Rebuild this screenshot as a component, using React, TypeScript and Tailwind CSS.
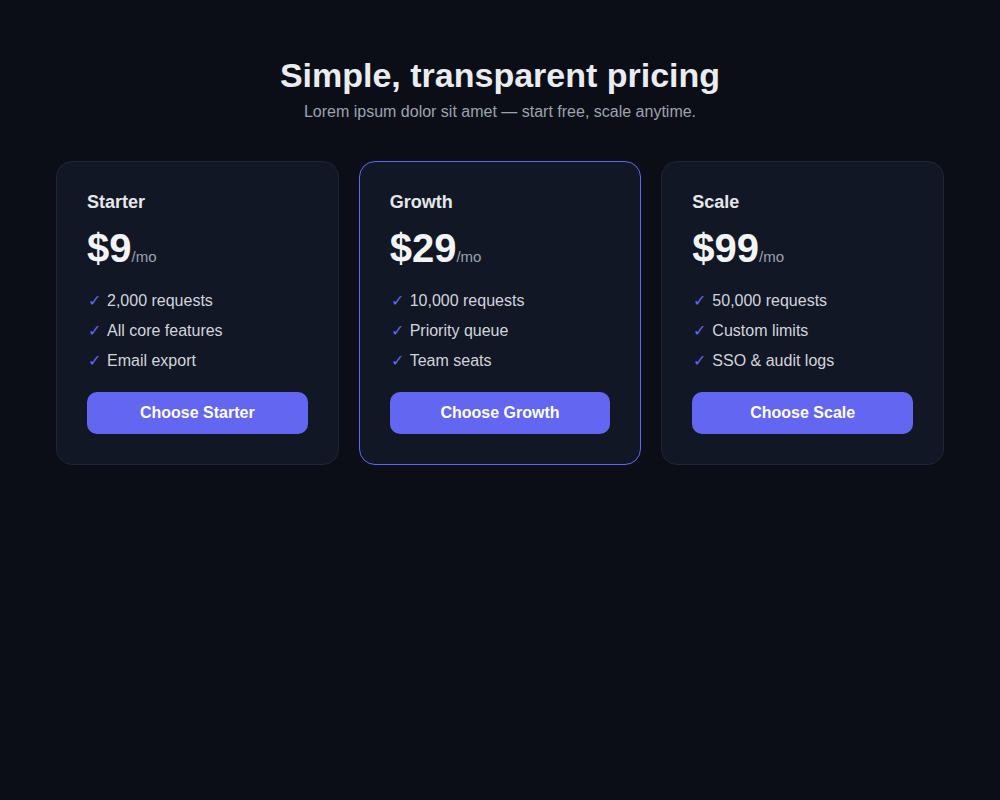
interface Plan {
  name: string;
  price: string;
  features: string[];
  highlight?: boolean;
}

const plans: Plan[] = [
  { name: 'Starter', price: '$9', features: ['2,000 requests', 'All core features', 'Email export'] },
  { name: 'Growth', price: '$29', features: ['10,000 requests', 'Priority queue', 'Team seats'], highlight: true },
  { name: 'Scale', price: '$99', features: ['50,000 requests', 'Custom limits', 'SSO & audit logs'] },
];

function PlanCard({ plan }: { plan: Plan }) {
  return (
    <div
      className={
        plan.highlight
          ? 'flex flex-col px-[30px] pt-[31px] pb-[30px] rounded-2xl bg-[#121725] border border-[#6366f1]'
          : 'flex flex-col px-[30px] pt-[31px] pb-[30px] rounded-2xl bg-[#121725] border border-[#1f2535]'
      }
    >
      {/* Name */}
      <h2 className="text-lg leading-[18px] font-semibold text-[#e5e7eb]">{plan.name}</h2>

      {/* Price */}
      <div className="mt-[17px] flex items-baseline">
        <span className="text-[40px] leading-none font-bold text-[#f3f4f6]">{plan.price}</span>
        <span className="text-[15px] text-[#9ca3af]">/mo</span>
      </div>

      {/* Features */}
      <ul className="mt-5 flex flex-col gap-[6px]">
        {plan.features.map((f) => (
          <li key={f} className="flex items-center gap-[6px] text-base leading-6 text-[#d1d5db]">
            <span className="text-[#6366f1] text-base pl-[1px]">✓</span>
            {f}
          </li>
        ))}
      </ul>

      <button className="mt-[19px] h-[42px] rounded-[10px] bg-[#6366f1] text-white text-base font-bold">
        Choose {plan.name}
      </button>
    </div>
  );
}

export default function App() {
  return (
    <div className="min-h-[800px] bg-[#0b0e16] pt-[55px] font-['Liberation_Sans',Arial,sans-serif]">
      <div className="text-center">
        <h1 className="text-[34px] leading-[41px] font-bold text-[#e9ecf1]">Simple, transparent pricing</h1>
        <p className="mt-1 text-base leading-6 text-[#9ca3af]">
          Lorem ipsum dolor sit amet — start free, scale anytime.
        </p>
      </div>

      <div className="mt-[37px] mx-auto w-[888px] grid grid-cols-3 gap-5">
        {plans.map((p) => (
          <PlanCard key={p.name} plan={p} />
        ))}
      </div>
    </div>
  );
}
